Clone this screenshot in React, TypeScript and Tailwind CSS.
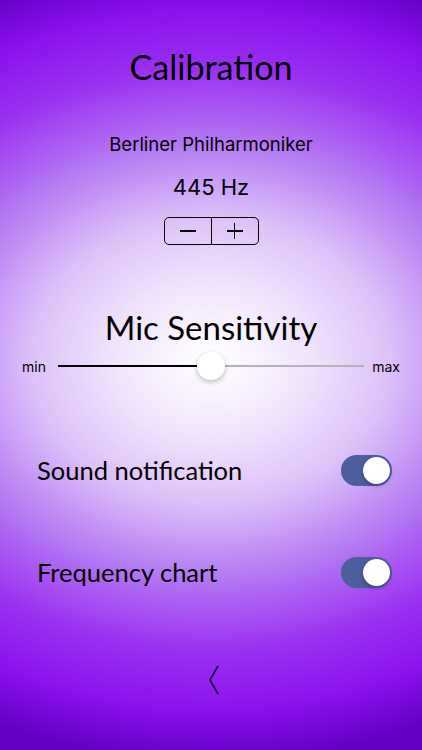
const Toggle = ({ on }: { on: boolean }) => (
  <div
    className={`flex h-[31px] w-[51px] items-center rounded-full p-[2px] ${
      on ? "justify-end bg-[#4c5e9c]" : "justify-start bg-[#d9d9de]"
    }`}
  >
    <div className="h-[27px] w-[27px] rounded-full bg-white shadow-[0_2px_4px_rgba(0,0,0,0.25)]" />
  </div>
);

const SettingRow = ({ label, on }: { label: string; on: boolean }) => (
  <div className="flex items-center justify-between pl-[37px] pr-[30px]">
    <span className="font-['Lato',sans-serif] text-[25.5px] leading-[31px] text-black">
      {label}
    </span>
    <Toggle on={on} />
  </div>
);

const App = () => {
  const sensitivity = 50;

  return (
    <div className="flex h-[750px] w-full flex-col items-stretch overflow-hidden bg-[radial-gradient(500px_400px_at_50%_48%,#ffffff_0%,#f0e2fc_20%,#dcc0f8_36%,#b47af3_54%,#9a30f0_73%,#8a10ee_88%,#6400c4_100%)] pt-[47px] text-black">
      <h1 className="text-center font-['Lato',sans-serif] text-[34px] leading-[40px] font-normal">
        Calibration
      </h1>

      <p className="mt-[46px] text-center font-['Inter',sans-serif] text-[18.5px] leading-[22px]">
        Berliner Philharmoniker
      </p>
      <p className="mt-[18px] text-center font-['Inter',sans-serif] text-[22px] leading-[28px]">
        445 Hz
      </p>

      <div className="mx-auto mt-[16px] flex h-[28px] w-[95px] rounded-[5px] border-[1.5px] border-black">
        <button className="flex flex-1 items-center justify-center">
          <span className="block h-[1.5px] w-[16px] bg-black" />
        </button>
        <button className="relative flex flex-1 items-center justify-center border-l-[1.5px] border-black">
          <span className="block h-[1.5px] w-[16px] bg-black" />
          <span className="absolute h-[16px] w-[1.5px] bg-black" />
        </button>
      </div>

      <h2 className="mt-[64px] text-center font-['Lato',sans-serif] text-[33px] leading-[36px] font-normal">
        Mic Sensitivity
      </h2>

      <div className="mt-[7px] flex h-[28px] items-center px-[22px]">
        <span className="w-[36px] font-['Inter',sans-serif] text-[14px]">min</span>
        <div className="relative flex h-[28px] flex-1 items-center">
          <div className="h-[2px] bg-black" style={{ width: `${sensitivity}%` }} />
          <div className="h-[2px] flex-1 bg-[#b5b0ba]" />
          <div
            className="absolute top-0 h-[28px] w-[28px] -translate-x-1/2 rounded-full bg-white shadow-[0_2px_5px_rgba(0,0,0,0.25)]"
            style={{ left: `${sensitivity}%` }}
          />
        </div>
        <span className="w-[36px] text-right font-['Inter',sans-serif] text-[14px]">max</span>
      </div>

      <div className="mt-[75px]">
        <SettingRow label="Sound notification" on />
      </div>
      <div className="mt-[71px]">
        <SettingRow label="Frequency chart" on />
      </div>

      <button className="mx-auto mt-[77px] pl-[6px]">
        <svg width="10" height="30" viewBox="0 0 10 30" fill="none">
          <polyline
            points="9,1 1,15 9,29"
            stroke="#1a0838"
            strokeWidth="1.6"
            strokeLinejoin="miter"
          />
        </svg>
      </button>
    </div>
  );
};

export default App;
